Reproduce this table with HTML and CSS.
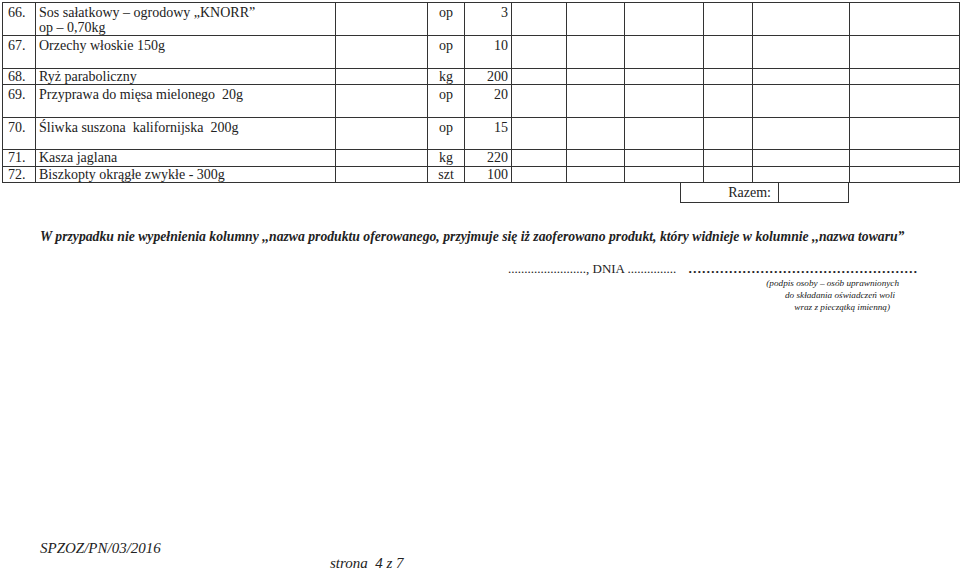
FILE: index.html
```html
<!DOCTYPE html>
<html lang="pl">
<head>
<meta charset="utf-8">
<link rel="stylesheet" href="styles.css">
</head>
<body>
<div class="page">
  <table class="grid">
    <colgroup>
      <col class="c1"><col class="c2"><col class="c3"><col class="c4"><col class="c5"><col class="c6">
      <col class="c7"><col class="c8"><col class="c9"><col class="c10"><col class="c11">
    </colgroup>
    <tbody>
      <tr class="h33"><td>66.</td><td>Sos sałatkowy – ogrodowy „KNORR”<br>op – 0,70kg</td><td></td><td class="unit">op</td><td class="qty">3</td><td></td><td></td><td></td><td></td><td></td><td></td></tr>
      <tr class="h33"><td>67.</td><td>Orzechy włoskie 150g</td><td></td><td class="unit">op</td><td class="qty">10</td><td></td><td></td><td></td><td></td><td></td><td></td></tr>
      <tr class="h16"><td>68.</td><td>Ryż paraboliczny</td><td></td><td class="unit">kg</td><td class="qty">200</td><td></td><td></td><td></td><td></td><td></td><td></td></tr>
      <tr class="h33"><td>69.</td><td>Przyprawa do mięsa mielonego&nbsp; 20g</td><td></td><td class="unit">op</td><td class="qty">20</td><td></td><td></td><td></td><td></td><td></td><td></td></tr>
      <tr class="h32"><td>70.</td><td>Śliwka suszona&nbsp; kalifornijska&nbsp; 200g</td><td></td><td class="unit">op</td><td class="qty">15</td><td></td><td></td><td></td><td></td><td></td><td></td></tr>
      <tr class="h17"><td>71.</td><td>Kasza jaglana</td><td></td><td class="unit">kg</td><td class="qty">220</td><td></td><td></td><td></td><td></td><td></td><td></td></tr>
      <tr class="h16"><td>72.</td><td>Biszkopty okrągłe zwykłe - 300g</td><td></td><td class="unit">szt</td><td class="qty">100</td><td></td><td></td><td></td><td></td><td></td><td></td></tr>
    </tbody>
  </table>
  <div class="sum">
    <div class="sum-label">Razem:</div>
    <div class="sum-value"></div>
  </div>
  <p class="note">W przypadku nie wypełnienia kolumny ,,nazwa produktu oferowanego, przyjmuje się iż zaoferowano produkt, który widnieje w kolumnie ,,nazwa towaru”</p>
  <div class="sign">
    <div class="sign-line"><span class="place">........................, DNIA ...............</span><span class="dots">……………………………………………</span></div>
    <div class="sign-note">
      <span class="l1">(podpis osoby – osób uprawnionych</span>
      <span class="l2">do składania oświadczeń woli</span>
      <span class="l3">wraz z pieczątką imienną)</span>
    </div>
  </div>
  <div class="footer">
    <div class="ref">SPZOZ/PN/03/2016</div>
    <div class="pageno">strona&nbsp; 4 z 7</div>
  </div>
</div>
</body>
</html>
```

FILE: styles.css
```css
html, body {
  margin: 0;
  padding: 0;
  background: #fff;
}
body {
  width: 960px;
  height: 573px;
  overflow: hidden;
  font-family: "Liberation Serif", "Times New Roman", serif;
  color: #222;
}
.page {
  padding: 2px 0 0 2px;
}
.grid {
  border-collapse: collapse;
  table-layout: fixed;
  width: 958px;
  font-size: 14px;
  line-height: 15px;
}
.grid td {
  border: 1px solid #333;
  padding: 0 0 0 3px;
  vertical-align: top;
  white-space: nowrap;
  overflow: hidden;
}
.grid td:first-child { padding-left: 5px; }
.c1 { width: 33px; }
.c2 { width: 300px; }
.c3 { width: 92px; }
.c4 { width: 37px; }
.c5 { width: 47px; }
.c6 { width: 55px; }
.c7 { width: 58px; }
.c8 { width: 79px; }
.c9 { width: 49px; }
.c10 { width: 97px; }
.c11 { width: 110px; }
.h33 { height: 33px; }
.h32 { height: 32px; }
.h17 { height: 17px; }
.h16 { height: 16px; }
.grid tr.h33 td, .grid tr.h32 td { padding-top: 2px; }
.grid td.unit { text-align: center; padding-left: 0; }
.grid td.qty { text-align: right; padding-right: 3px; }
.sum {
  display: flex;
  margin-left: 678px;
  height: 20px;
  font-size: 14px;
  line-height: 19px;
}
.sum-label {
  width: 98px;
  box-sizing: border-box;
  border: 1px solid #333;
  border-top: none;
  border-right: none;
  text-align: right;
  padding-right: 7px;
}
.sum-value {
  width: 71px;
  box-sizing: border-box;
  border: 1px solid #333;
  border-top: none;
}
.note {
  margin: 26px 0 0 38px;
  font-size: 13.7px;
  font-weight: bold;
  font-style: italic;
  white-space: nowrap;
  line-height: 16px;
}
.sign {
  margin: 16px 0 0 506px;
  width: 420px;
}
.sign-line {
  display: flex;
  font-size: 13px;
  line-height: 15px;
  white-space: nowrap;
}
.sign-line .place { width: 180px; }
.sign-line .dots { font-weight: bold; font-size: 13.5px; }
.sign-note {
  display: flex;
  flex-direction: column;
  align-items: flex-end;
  font-size: 9.2px;
  font-style: italic;
  line-height: 12px;
  margin-top: 1px;
  padding-right: 29px;
}
.sign-note .l2 { margin-right: 4px; }
.sign-note .l3 { margin-right: 9px; }
.footer {
  margin: 228px 0 0 38px;
  font-style: italic;
  font-size: 15px;
  line-height: 15px;
}
.pageno {
  margin: 0 0 0 290px;
}
```
